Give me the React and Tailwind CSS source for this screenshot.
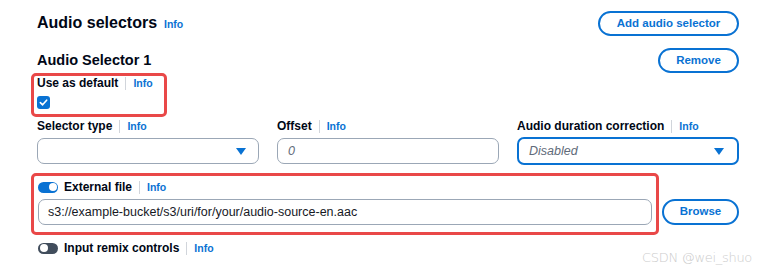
import React from 'react';

// Small building blocks reused across the form
const Info = () => <span className="text-[10.5px] font-bold text-[#0972d3]">Info</span>;

const Label = ({ children }) => (
    <div className="flex items-center h-[14px] text-[12px] leading-[14px] font-bold text-[#000716]">
        <span>{children}</span>
        <span className="mx-[7px] w-px h-[13px] bg-[#d1d5db]" />
        <Info />
    </div>
);

const PillButton = ({ children, className = '' }) => (
    <button className={`h-[25px] rounded-full border-2 border-[#0972d3] text-[11.5px] font-bold text-[#0972d3] flex items-center justify-center ${className}`}>
        {children}
    </button>
);

const Caret = () => (
    <svg width="10" height="7" viewBox="0 0 10 7">
        <polygon points="0,0 10,0 5,7" fill="#0972d3" />
    </svg>
);

const Toggle = ({ on }) => (
    <span className={`relative inline-block w-[20px] h-[11px] rounded-full ${on ? 'bg-[#0972d3]' : 'bg-[#414d5c]'}`}>
        <span className={`absolute top-[1.5px] w-[8px] h-[8px] rounded-full bg-white ${on ? 'right-[1.5px]' : 'left-[1.5px]'}`} />
    </span>
);

const App = () => {
    return (
        <div className="relative w-[757px] h-[271px] overflow-hidden bg-white pt-[11px] pl-[37px] pr-[18px] font-['Liberation_Sans',Arial,sans-serif] text-[#000716]">
            {/* header */}
            <div className="flex items-center justify-between h-[25px]">
                <div className="flex items-baseline gap-[7px]">
                    <h2 className="text-[16px] font-bold leading-none">Audio selectors</h2>
                    <Info />
                </div>
                <PillButton className="w-[141px]">Add audio selector</PillButton>
            </div>

            <div className="flex items-center justify-between h-[25px] mt-[12px]">
                <h3 className="text-[14.5px] font-bold leading-none">Audio Selector 1</h3>
                <PillButton className="w-[81px]">Remove</PillButton>
            </div>

            {/* use as default */}
            <div className="-ml-[6px] w-[136px] border-[3px] border-[#e94848] rounded-[5px] pl-[3px] pb-[5px]">
                <Label>Use as default</Label>
                <div className="mt-[6px] w-[13px] h-[13px] rounded-[3px] bg-[#0972d3] flex items-center justify-center">
                    <svg width="9" height="9" viewBox="0 0 10 10">
                        <path d="M1.5 5.2 L4 7.6 L8.5 2.4" fill="none" stroke="white" strokeWidth="1.8" strokeLinecap="round" strokeLinejoin="round" />
                    </svg>
                </div>
            </div>

            {/* fields */}
            <div className="grid grid-cols-3 gap-[18px] mt-[2px] items-start">
                <div>
                    <Label>Selector type</Label>
                    <div className="mt-[5px] h-[26px] rounded-[7px] border border-[#9ba7b6] flex items-center justify-end pr-[12px]">
                        <Caret />
                    </div>
                </div>
                <div>
                    <Label>Offset</Label>
                    <div className="mt-[5px] h-[26px] rounded-[7px] border border-[#9ba7b6] flex items-center pl-[10px] text-[12.5px] italic text-[#5f6b7a]">
                        0
                    </div>
                </div>
                <div>
                    <Label>Audio duration correction</Label>
                    <div className="mt-[4px] h-[28px] rounded-[7px] border-2 border-[#0972d3] flex items-center justify-between pl-[10px] pr-[13px] text-[12.5px] italic text-[#5f6b7a]">
                        <span>Disabled</span>
                        <Caret />
                    </div>
                </div>
            </div>

            {/* external file */}
            <div className="flex items-end gap-[3px] mt-[8px]">
                <div className="-ml-[6px] flex-1 border-[3px] border-[#e94848] rounded-[5px] px-[4px] pt-[4px] pb-[7px]">
                    <div className="flex items-center gap-[6px]">
                        <Toggle on />
                        <Label>External file</Label>
                    </div>
                    <div className="mt-[5px] h-[26px] rounded-[7px] border border-[#9ba7b6] flex items-center pl-[9px] text-[12.5px] text-[#16191f]">
                        s3://example-bucket/s3/uri/for/your/audio-source-en.aac
                    </div>
                </div>
                <PillButton className="w-[77px] h-[26px] mb-[10px] shrink-0">Browse</PillButton>
            </div>

            <div className="flex items-center gap-[6px] mt-[6px] pl-[1px]">
                <Toggle />
                <Label>Input remix controls</Label>
            </div>

            {/* watermark */}
            <div className="absolute right-[5px] bottom-[7px] text-[13px] leading-none text-[#cccccc] font-['DejaVu_Sans',sans-serif] font-extralight tracking-[-0.3px]">
                CSDN @wei_shuo
            </div>
        </div>
    );
};

export default App;
